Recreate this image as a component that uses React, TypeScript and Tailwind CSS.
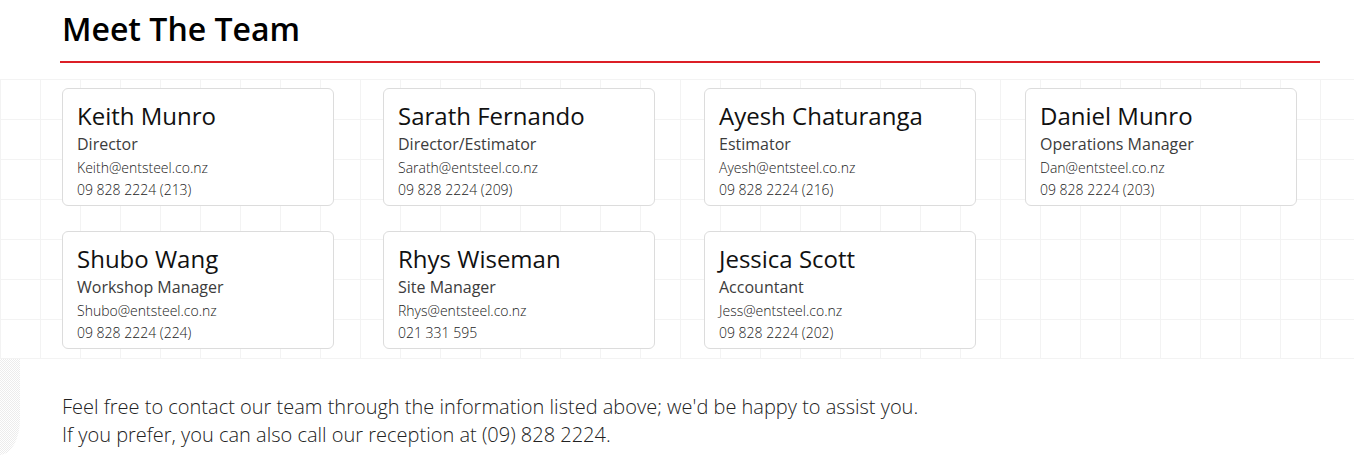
import React from "react";

const team = [
  { name: "Keith Munro", role: "Director", email: "Keith@entsteel.co.nz", phone: "09 828 2224 (213)" },
  { name: "Sarath Fernando", role: "Director/Estimator", email: "Sarath@entsteel.co.nz", phone: "09 828 2224 (209)" },
  { name: "Ayesh Chaturanga", role: "Estimator", email: "Ayesh@entsteel.co.nz", phone: "09 828 2224 (216)" },
  { name: "Daniel Munro", role: "Operations Manager", email: "Dan@entsteel.co.nz", phone: "09 828 2224 (203)" },
  { name: "Shubo Wang", role: "Workshop Manager", email: "Shubo@entsteel.co.nz", phone: "09 828 2224 (224)" },
  { name: "Rhys Wiseman", role: "Site Manager", email: "Rhys@entsteel.co.nz", phone: "021 331 595" },
  { name: "Jessica Scott", role: "Accountant", email: "Jess@entsteel.co.nz", phone: "09 828 2224 (202)" },
];

function MemberCard({ m }: { m: (typeof team)[number] }) {
  return (
    <div className="w-[272px] h-[118px] bg-white border border-[#dcdcdc] rounded-md pl-[14px] pt-[11px]">
      <div className="text-[24px] leading-[32px] text-[#111]">{m.name}</div>
      <div className="mt-[1px] text-[16px] leading-[22px] text-[#3c3c3c]">{m.role}</div>
      <div className="mt-[2px] text-[14px] leading-[21px] font-light text-[#222]">{m.email}</div>
      <div className="mt-[1px] text-[14px] leading-[21px] font-light text-[#222]">{m.phone}</div>
    </div>
  );
}

export default function App() {
  return (
    <div className="relative w-[1354px] h-[462px] bg-white overflow-hidden font-['Open_Sans',sans-serif]">
      {/* header */}
      <div className="pl-[62px] pr-[34px] pt-[9px]">
        <h1 className="text-[32px] leading-[40px] font-semibold text-black">Meet The Team</h1>
      </div>
      <div className="ml-[60px] mr-[34px] mt-[12px] h-[2px] bg-[#dc1f26]" />

      {/* cards on grid */}
      <div className="mt-[16px] pt-[9px] pb-[9px] border-b border-[#f3f3f3] bg-[linear-gradient(to_right,#f3f3f3_1px,transparent_1px),linear-gradient(to_bottom,#f3f3f3_1px,transparent_1px)] bg-[size:40px_40px]">
        <div className="pl-[62px] grid grid-cols-[repeat(4,272px)] gap-x-[49px] gap-y-[25px]">
          {team.map((m) => (
            <MemberCard key={m.email} m={m} />
          ))}
        </div>
      </div>

      {/* decorative corner shape */}
      <div className="absolute left-0 top-[359px] w-[20px] h-[96px] rounded-br-[20px_36px] bg-[repeating-conic-gradient(#ececec_0_25%,#ffffff_0_50%)] bg-[size:2px_2px]" />

      {/* footer text */}
      <div className="pl-[62px] mt-[34px] text-[20px] leading-[28px] font-light text-[#222]">
        <p>Feel free to contact our team through the information listed above; we'd be happy to assist you.</p>
        <p>If you prefer, you can also call our reception at (09) 828 2224.</p>
      </div>
    </div>
  );
}
